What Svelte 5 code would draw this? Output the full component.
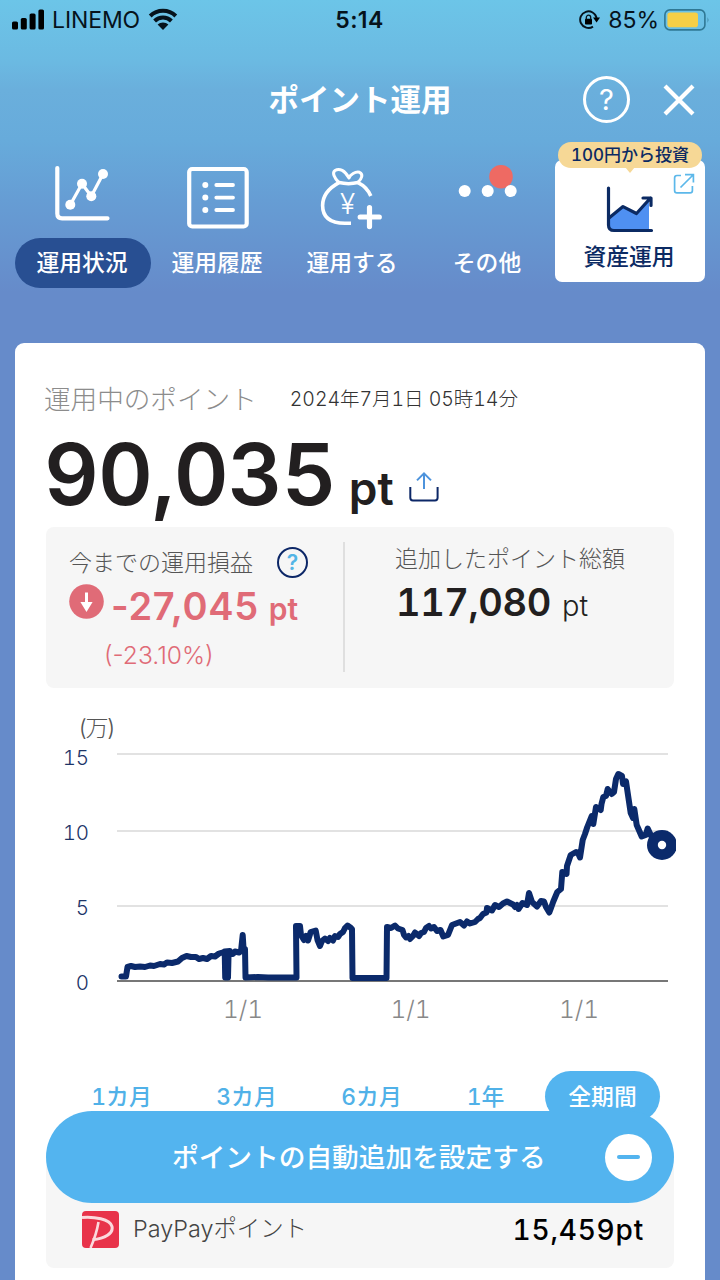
<script>
  let activeNav = $state('status');
  let activeRange = $state('all');

  const navItems = [
    { id: 'status', label: '運用状況' },
    { id: 'history', label: '運用履歴' },
    { id: 'invest', label: '運用する' },
    { id: 'other', label: 'その他' },
  ];

  const ranges = [
    { id: '1m', label: '1カ月' },
    { id: '3m', label: '3カ月' },
    { id: '6m', label: '6カ月' },
    { id: '1y', label: '1年' },
    { id: 'all', label: '全期間' },
  ];

  // chart area: x 71..622, 0 pt at y 281, 150,000 pt at y 54
  const grid = [
    { label: '15', y: 54, textY: 64.5 },
    { label: '10', y: 131, textY: 139.5 },
    { label: '5', y: 206, textY: 214.5 },
    { label: '0', y: 281, textY: 289.5 },
  ];
  const years = [197, 364.5, 533];

  const history = [
    [75.5, 276.5], [80, 276.5], [81.5, 267], [85, 266], [89, 267], [94, 266.5], [99, 267], [104, 265.5],
    [108, 266], [114, 264], [118, 264.5], [121, 262.5], [126, 263], [132, 261.5], [136, 258], [140.5, 256],
    [145, 257], [150, 257], [153, 259], [157, 258], [161, 259], [165, 256], [169, 256.5], [173, 253.5],
    [178, 252], [181, 252.5], [184, 251], [178.7, 251.5], [179.2, 277.5], [182, 277.5], [182.6, 253], [187, 254],
    [189, 251.5], [193, 252.5], [195, 251], [196.7, 235], [197.5, 248], [199, 249], [199.5, 277.5], [212, 277],
    [222, 277.5], [250.5, 277.5], [250, 226], [254, 226], [255, 235], [258, 240], [260, 236], [262, 240.5],
    [264.7, 232], [269.7, 230.5], [271.5, 240], [274, 246], [276, 241], [279, 238.5], [282, 241], [284, 238],
    [287, 240.5], [289, 236], [292, 237], [294, 234], [297, 232], [299, 228], [301.5, 225.5], [305, 228],
    [306, 229], [306.5, 278], [340.5, 278], [341, 227], [345, 228], [349, 225.5], [352, 228.5],
    [356.5, 230], [358, 235], [360, 237.5], [362.5, 236], [364, 239], [367, 236], [369, 232.5], [373, 236],
    [375, 233], [378, 232], [380, 228], [383, 226], [385, 228.5], [388, 227], [391, 231], [394.5, 230],
    [397.3, 236.5], [402, 235], [404, 230], [406, 225], [410, 223.5], [414, 222], [418, 225.5], [421, 221.5],
    [424, 223.5], [429, 222], [432, 219], [434, 218], [437, 214], [440.5, 212.5], [441, 208], [446, 210.5],
    [449, 205], [453, 207], [457, 203.5], [461, 201.5], [464, 203], [467, 204.5], [469, 207], [471, 205],
    [472.5, 209], [476.5, 203], [481, 205], [483, 193], [486, 202], [491, 206.5], [495, 201], [498, 201.5],
    [500, 207], [503.3, 212.5], [505, 208], [507.3, 201.5], [511.3, 192], [515, 189], [516.3, 172],
    [520.5, 174], [521, 166], [524.7, 155], [530, 152], [532, 153], [534, 157.5], [536.7, 140],
    [539, 134], [541.3, 127], [545.7, 116], [547.3, 124], [550, 107], [554.7, 110], [555.5, 104],
    [557.3, 97], [560, 96], [561.7, 89], [565.7, 94], [568, 92], [570, 79], [572.3, 74], [576, 76], [577, 84],
    [580, 81.5], [582.3, 97], [584.7, 113], [587, 118], [588.3, 109], [590.7, 125], [595.7, 136.5],
    [599.7, 135], [601.7, 128.5], [605.7, 137], [616, 145],
  ];
  const linePoints = history.map((p) => p.join(',')).join(' ');
</script>

<div class="app">
  <div class="statusbar">
    <div class="carrier">
      <svg class="signal" width="33" height="21" viewBox="0 0 33 21">
        <rect x="0" y="12.5" width="6" height="8" rx="1.6" />
        <rect x="8.8" y="9" width="6" height="11.5" rx="1.6" />
        <rect x="17.6" y="4.5" width="6" height="16" rx="1.6" />
        <rect x="26.4" y="0.5" width="5.6" height="20" rx="1.6" />
      </svg>
      <span class="carrier-name">LINEMO</span>
      <svg class="wifi" width="30" height="22" viewBox="0 0 30 22">
        <path d="M2.2 8 a18.5 18.5 0 0 1 25.6 0" />
        <path d="M6.6 13 a12 12 0 0 1 16.8 0" />
        <path class="wifi-dot" d="M9.6 16.6 a7.8 7.8 0 0 1 10.8 0 L15 22 z" />
      </svg>
    </div>
    <span class="clock">5:14</span>
    <div class="power">
      <svg width="21" height="20" viewBox="0 0 21 20">
        <path d="M14 16.6 A8.3 8.3 0 1 1 17.6 8" fill="none" stroke="#06131c" stroke-width="1.9" />
        <path d="M14 7.6 h7 l-3.4 4.8 z" />
        <rect x="6" y="8.8" width="7" height="5.8" rx="0.8" />
        <path d="M7.3 9.4 V7.4 a2.2 2.2 0 0 1 4.4 0 V9.4" fill="none" stroke="#06131c" stroke-width="1.3" />
      </svg>
      <span class="percent">85%</span>
      <svg class="battery" width="46" height="22" viewBox="0 0 46 22">
        <rect x="0.9" y="0.9" width="40" height="20" rx="5" fill="none" stroke="#2f7894" stroke-width="1.6" />
        <rect x="3.4" y="3.6" width="30.6" height="14.6" rx="2.8" fill="#f6cf46" />
        <path d="M43.6 8 q1.7 3 0 6 z" fill="#2f7894" />
      </svg>
    </div>
  </div>

  <header>
    <h1>ポイント運用</h1>
    <div class="header-actions">
      <button class="help" aria-label="ヘルプ">?</button>
      <button class="close" aria-label="閉じる">
        <svg width="32" height="32" viewBox="0 0 32 32">
          <path d="M2 2 L30 30 M30 2 L2 30" stroke="#fff" stroke-width="4.2" />
        </svg>
      </button>
    </div>
  </header>

  <nav>
    {#each navItems as item}
      <button class="nav-item" onclick={() => (activeNav = item.id)}>
        <svg class="nav-icon" width="135" height="78" viewBox="0 0 135 78">
          {#if item.id === 'status'}
            <path d="M42.3 8 V53.5 q0 4.8 4.8 4.8 H92.5" />
            <path d="M55.3 44.7 L67 23.7 L76.3 36.3 L88 14" stroke-width="3.2" />
            <g class="solid">
              <circle cx="55.3" cy="44.7" r="5" />
              <circle cx="67" cy="23.7" r="5" />
              <circle cx="76.3" cy="36.3" r="5" />
              <circle cx="88" cy="14" r="5" />
            </g>
          {:else if item.id === 'history'}
            <rect x="39.2" y="9" width="57.5" height="57.5" rx="3" />
            <path d="M66.3 25 H83 M66.3 37.6 H83 M66.3 50 H83" stroke-width="3.8" />
            <g class="solid">
              <circle cx="55.3" cy="25" r="3" />
              <circle cx="55.3" cy="37.6" r="3" />
              <circle cx="55.3" cy="50" r="3" />
            </g>
          {:else if item.id === 'invest'}
            <path
              d="M66 63.2 H60 C46 63.2 37.6 58 37.6 45.5 C37.6 36 44 28 54 22.6 C60 24 67 24 73 22.6 C79 25.5 83.5 30.5 85.8 36"
              stroke-width="3.6"
              stroke-linecap="butt"
            />
            <path
              d="M54 22.6 C49 18 47 12.5 50 10.5 C54.5 7.8 60 10.5 64 18 C65 14.5 70.5 11.3 74.5 12.3 C78.5 14 77 19 72.6 22.6"
              stroke-width="3"
            />
            <path d="M75.2 57 H94.3 M84.5 47.6 V66.6" stroke-width="5.2" />
            <text x="62.6" y="53.5" text-anchor="middle">¥</text>
          {:else}
            <circle class="alert" cx="81" cy="16.7" r="11.8" />
            <g class="solid">
              <circle cx="44.7" cy="31" r="6" />
              <circle cx="67.7" cy="31" r="6" />
              <circle cx="90.7" cy="31" r="6" />
            </g>
          {/if}
        </svg>
        <span class="nav-label" class:active={activeNav === item.id}>{item.label}</span>
      </button>
    {/each}

    <button class="promo">
      <span class="ribbon">100円から投資</span>
      <svg class="external" width="22" height="22" viewBox="0 0 22 22">
        <path d="M8 2.5 H4 a2.4 2.4 0 0 0 -2.4 2.4 V17.5 a2.4 2.4 0 0 0 2.4 2.4 H17 a2.4 2.4 0 0 0 2.4 -2.4 V13" />
        <path d="M7.5 14.5 L20 2 M12 1.6 H20.4 V9.5" />
      </svg>
      <svg class="promo-icon" width="48" height="48" viewBox="0 0 48 48">
        <path d="M3 32 L17 22 L30.5 28.5 L43 14 V44 H6 Q3 44 3 41 Z" fill="#4f90f2" />
        <path
          d="M2.5 3 V40 Q2.5 45.5 8 45.5 H45.5 M3 33 L17 21.6 L30.5 28.5 L44.5 13 M37 13 H45 V20.5"
          fill="none" stroke="#0b2a63" stroke-width="3.2" stroke-linejoin="round" stroke-linecap="round"
        />
      </svg>
      <span class="promo-label">資産運用</span>
    </button>
  </nav>

  <main>
    <div class="heading">
      <h2>運用中のポイント</h2>
      <time>2024年7月1日 05時14分</time>
    </div>

    <div class="total">
      <span class="total-value">90,035</span>
      <span class="total-unit">pt</span>
      <svg class="share" width="30" height="34" viewBox="0 0 30 34">
        <path d="M1.3 16 V26.8 a2.6 2.6 0 0 0 2.6 2.6 H26 a2.6 2.6 0 0 0 2.6 -2.6 V16" stroke="#0c2767" />
        <path d="M15 18 V2.6 M8 9.4 L15 2.4 L22 9.4" stroke="#4d93dc" />
      </svg>
    </div>

    <div class="stats">
      <div class="profit">
        <div class="stat-label">
          <span>今までの運用損益</span>
          <button class="hint" aria-label="運用損益について">?</button>
        </div>
        <div class="profit-row">
          <svg width="35" height="35" viewBox="0 0 35 35">
            <circle cx="17.5" cy="17.5" r="17.3" fill="#e06b77" />
            <path d="M16 8.5 h3 v9.5 h4.6 l-6.1 10 l-6.1 -10 h4.6 z" fill="#fff" />
          </svg>
          <span class="profit-value">-27,045</span>
          <span class="profit-unit">pt</span>
        </div>
        <div class="profit-rate">(-23.10%)</div>
      </div>
      <div class="added">
        <div class="added-label">追加したポイント総額</div>
        <div class="added-row">
          <span class="added-value">117,080</span>
          <span class="added-unit">pt</span>
        </div>
      </div>
    </div>

    <svg class="chart" width="630" height="340" viewBox="0 0 630 340">
      <text class="unit" x="32" y="35.5" textLength="38">(万)</text>
      {#each grid as line}
        <line x1="71" x2="622" y1={line.y} y2={line.y} class:base={line.label === '0'} />
        <text class="y-label" x="42.5" y={line.textY}>{line.label}</text>
      {/each}
      {#each years as x}
        <text class="x-label" {x} y="318">1/1</text>
      {/each}
      <polyline points={linePoints} />
      <circle cx="616" cy="145" r="15" fill="#0b2a6b" />
      <circle cx="616" cy="145" r="4.2" fill="#fff" />
    </svg>

    <div class="ranges">
      {#each ranges as range}
        <button class:active={activeRange === range.id} onclick={() => (activeRange = range.id)}>
          {range.label}
        </button>
      {/each}
    </div>

    <div class="balance">
      <svg width="37" height="37" viewBox="0 0 37 37">
        <rect width="37" height="37" rx="4" fill="#e8334a" />
        <path d="M0 6.5 C12 5.5 28 8 30 15.5 C31.5 22.5 23 27.5 10.5 28.8" fill="none" stroke="#fbd9dd" stroke-width="3" />
        <path d="M16.5 11 C15 20 12 29 8.5 37" fill="none" stroke="#fbd9dd" stroke-width="2.6" />
      </svg>
      <span class="balance-name">PayPayポイント</span>
      <span class="balance-value">15,459pt</span>
    </div>
  </main>

  <button class="auto-add">
    <span class="auto-add-label">ポイントの自動追加を設定する</span>
    <span class="minus"></span>
  </button>
</div>

<style>
  :global(body) { background: #668bca; }

  .app {
    position: relative;
    display: flex; flex-direction: column;
    width: 720px; height: 1280px;
    overflow: hidden;
    font-family: Inter, "Noto Sans CJK JP", sans-serif;
    background: linear-gradient(#6cc5e8 0, #6bbae2 60px, #6aafdc 90px, #67abdb 140px, #669dd4 200px, #668bca 292px);
  }
  button {
    padding: 0; border: 0; background: none;
    font: inherit; color: inherit; cursor: pointer;
  }
  h1, h2 { margin: 0; }
  svg { display: block; flex-shrink: 0; }

  /* Status bar */
  .statusbar {
    display: grid; grid-template-columns: 1fr auto 1fr;
    align-items: center;
    height: 40px; padding: 0 10px 0 12px;
    color: #06131c; font-size: 23px;
  }
  .carrier { display: flex; align-items: center; }
  .signal { margin-top: -2px; }
  .carrier-name { margin-left: 7px; letter-spacing: -0.1px; }
  .wifi { margin: -2px 0 0 8px; fill: none; stroke: #06131c; stroke-width: 4; }
  .wifi-dot { fill: #06131c; stroke: none; }
  .clock { margin-right: 3px; font-weight: 600; letter-spacing: 0.4px; }
  .power { display: flex; align-items: center; justify-content: flex-end; }
  .percent { margin: 0 5px 0 8px; }

  /* Title */
  header {
    position: relative;
    display: flex; align-items: center; justify-content: center;
    height: 120px;
    color: #fff;
  }
  h1 { font-size: 30.5px; font-weight: 700; line-height: 120px; }
  .header-actions {
    position: absolute; right: 25px; top: 36px;
    display: flex; align-items: center; gap: 33px;
  }
  .help {
    box-sizing: border-box;
    width: 47px; height: 47px;
    border: 3px solid #fff; border-radius: 50%;
    font-size: 29px; line-height: 40px;
  }

  /* Navigation */
  nav { display: flex; padding: 0 15px; height: 183px; color: #fff; }
  .nav-item { display: flex; flex-direction: column; width: 135px; height: 128px; }
  .nav-icon {
    fill: none; stroke: #fff; stroke-width: 4.2;
    stroke-linecap: round; stroke-linejoin: round;
  }
  .nav-icon .solid { fill: #fff; stroke: none; }
  .nav-icon .alert { fill: #ee6a63; stroke: none; }
  .nav-icon text { fill: #fff; stroke: none; font-size: 28px; font-weight: 300; }
  .nav-label {
    width: 136px; height: 50px;
    border-radius: 25px;
    font-size: 22.8px; font-weight: 500; line-height: 49px; text-indent: -2px;
  }
  .nav-label.active { background: #284f92; }

  .promo {
    position: relative;
    display: flex; flex-direction: column; align-items: center;
    width: 150px; height: 122px;
    border-radius: 7px;
    background: #fff; color: #0b2a63;
  }
  .ribbon {
    position: absolute; top: -18px; left: 3px;
    width: 144px; height: 26px;
    border-radius: 13px;
    background: #f6d896;
    font-size: 17px; font-weight: 500; line-height: 26px; white-space: nowrap;
    font-variant-numeric: tabular-nums;
  }
  .ribbon::after {
    content: '';
    position: absolute; left: 67px; top: 25px;
    border: 5px solid transparent; border-top: 6px solid #f6d896; border-bottom: 0;
  }
  .external {
    position: absolute; right: 10px; top: 13px;
    fill: none; stroke: #5cb8ea; stroke-width: 1.7;
  }
  .promo-icon { margin-top: 25px; }
  .promo-label { font-size: 22.8px; font-weight: 500; line-height: 48px; text-indent: -2px; }

  /* Summary card */
  main {
    display: flex; flex-direction: column;
    height: 937px; margin: 0 15px; padding: 0 31px;
    border-radius: 9px 9px 0 0;
    background: #fff;
    box-sizing: border-box;
    font-variant-numeric: tabular-nums;
  }
  .heading {
    display: flex; align-items: center;
    height: 52px; margin: 30px 0 0 -2px;
  }
  h2 { font-size: 26.6px; font-weight: 300; color: #8c8c8c; line-height: 52px; }
  time {
    margin: -4px 0 0 33px;
    font-size: 19.5px; font-weight: 300; color: #333; letter-spacing: -0.05px;
  }

  .total { display: flex; align-items: baseline; height: 102px; color: #221f20; }
  .total-value { margin-left: -2px; font-size: 85px; font-weight: 600; line-height: 100px; letter-spacing: -1px; }
  .total-unit { margin-left: 13px; font-size: 46px; font-weight: 600; }
  .share { margin-left: 15px; fill: none; stroke-width: 2; }

  .stats {
    display: flex; flex-shrink: 0;
    height: 161px;
    border-radius: 8px;
    background: #f6f6f6;
  }
  .profit {
    width: 299px; height: 130px; margin-top: 15px;
    border-right: 2px solid #dfdfdf;
    box-sizing: border-box; padding-left: 23px;
    font-variant-numeric: normal;
  }
  .stat-label, .added-label { color: #555; font-size: 23px; font-weight: 300; }
  .stat-label { display: flex; align-items: center; height: 41px; }
  .stat-label span { margin-top: -4px; }
  .hint {
    box-sizing: border-box;
    width: 31px; height: 31px; margin-left: 24px;
    border: 2.5px solid #0c2767; border-radius: 50%;
    color: #53b5e6; font-size: 21px; font-weight: 600; line-height: 25px;
  }
  .profit-row { display: flex; align-items: baseline; height: 46px; color: #e06b77; }
  .profit-row svg { align-self: flex-start; margin-top: 1px; }
  .profit-value { margin-left: 7px; font-size: 38px; font-weight: 600; line-height: 46px; letter-spacing: 0.7px; }
  .profit-unit { margin-left: 10px; font-size: 30px; font-weight: 600; }
  .profit-rate {
    margin-left: 35px;
    color: #e06b77; font-size: 24.6px; font-weight: 300; line-height: 52px;
  }
  .added { padding: 8px 0 0 50px; }
  .added-label { line-height: 48px; }
  .added-row { display: flex; align-items: baseline; margin: -2px 0 0 1px; color: #221f20; }
  .added-value { font-size: 38px; font-weight: 600; line-height: 42px; letter-spacing: -0.4px; }
  .added-unit { margin-left: 11px; font-size: 29px; font-weight: 300; }

  /* History chart */
  .chart { margin-top: 12px; }
  .chart line { stroke: #e2e2e2; stroke-width: 1.8; }
  .chart line.base { stroke: #777; }
  .chart polyline {
    fill: none; stroke: #0b2a6b; stroke-width: 6;
    stroke-linejoin: round; stroke-linecap: round;
  }
  .chart .unit { fill: #555; font-size: 23px; font-weight: 300; }
  .chart .y-label { fill: #1d3467; font-size: 20.5px; font-weight: 300; text-anchor: end; letter-spacing: -0.4px; }
  .chart .x-label { fill: #888; font-size: 24.5px; font-weight: 300; text-anchor: middle; }

  .ranges {
    display: grid; grid-template-columns: 125px 125px 125px 103px 115px;
    flex-shrink: 0;
    height: 51px; margin: 31px 0 0 13px;
    color: #50b1e8; font-size: 22.8px; font-weight: 500;
  }
  .ranges button { padding-bottom: 2px; }
  .ranges .active {
    width: 115px; margin-left: 8px;
    border-radius: 26px;
    background: #53b4ef; color: #fff;
  }

  .balance {
    display: flex; align-items: center; flex-shrink: 0;
    box-sizing: border-box;
    height: 108px; margin-top: 38px; padding: 30px 31px 0 36px;
    border-radius: 8px;
    background: #f6f6f6;
  }
  .balance-name { margin: -5px 0 0 14px; color: #444; font-size: 23.4px; font-weight: 300; }
  .balance-value { margin: 2px -1px 0 auto; color: #000; font-size: 28px; font-weight: 500; letter-spacing: 0.8px; }

  .auto-add {
    position: absolute; left: 46px; top: 1111px;
    display: flex; align-items: center;
    box-sizing: border-box;
    width: 628px; height: 92px; padding: 0 22.5px 0 126px;
    border-radius: 46px;
    background: #53b4ef; color: #fff;
  }
  .auto-add-label { margin-top: -4px; font-size: 26.7px; font-weight: 500; white-space: nowrap; }
  .minus {
    display: grid; place-items: center;
    width: 47px; height: 47px; margin-left: auto;
    border-radius: 50%;
    background: #fff;
  }
  .minus::before {
    content: '';
    width: 23px; height: 4px;
    border-radius: 2px;
    background: #53b4ef;
  }
</style>
